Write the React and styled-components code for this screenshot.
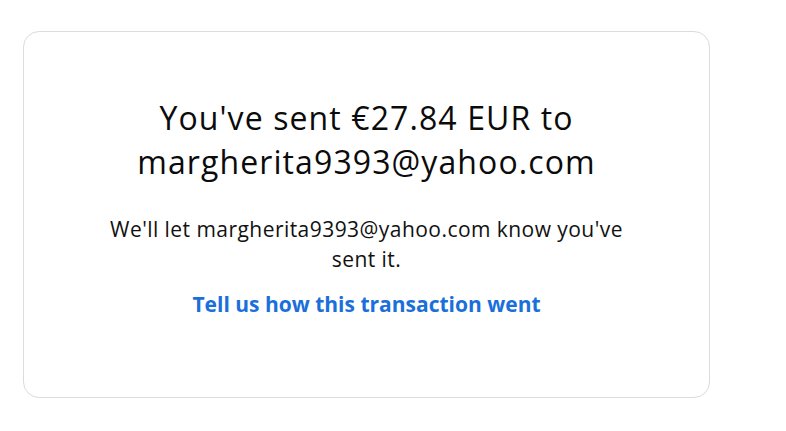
import React from "react";
import styled, { createGlobalStyle } from "styled-components";

const GlobalStyle = createGlobalStyle`
  html, body {
    margin: 0;
    padding: 0;
    background: #ffffff;
  }
  body {
    font-family: "Open Sans", "Noto Sans", "Liberation Sans", sans-serif;
    color: #111111;
  }
`;

const Page = styled.div`
  width: 786px;
  height: 431px;
  padding: 31px 0 0 23px;
  box-sizing: border-box;
`;

const Card = styled.div`
  width: 687px;
  height: 367px;
  box-sizing: border-box;
  border: 1px solid #dcdcdc;
  border-radius: 16px;
  display: flex;
  flex-direction: column;
  align-items: center;
  padding-top: 64px;
  text-align: center;
`;

const Title = styled.h1`
  margin: 0;
  max-width: 520px;
  font-size: 32px;
  line-height: 44px;
  font-weight: 400;
  letter-spacing: 1.1px;
  color: #0b0b0b;
`;

const Message = styled.p`
  margin: 30px 0 0;
  max-width: 540px;
  font-size: 21px;
  line-height: 30px;
  letter-spacing: 0.45px;
  color: #111111;
`;

const FeedbackLink = styled.a`
  margin-top: 15px;
  font-size: 21px;
  line-height: 30px;
  font-weight: 700;
  color: #1a6fdb;
  text-decoration: none;
  cursor: pointer;
`;

export default function App() {
  const email = "margherita9393@yahoo.com";

  return (
    <>
      <GlobalStyle />
      <Page>
        <Card>
          <Title>
            You've sent €27.84 EUR to {email}
          </Title>
          <Message>We'll let {email} know you've sent it.</Message>
          <FeedbackLink href="#">Tell us how this transaction went</FeedbackLink>
        </Card>
      </Page>
    </>
  );
}
